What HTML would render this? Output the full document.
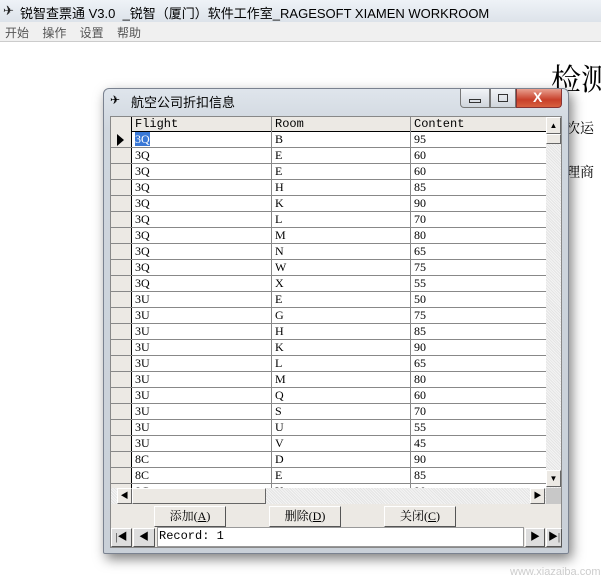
<!DOCTYPE html>
<html><head><meta charset="utf-8"><style>
*{margin:0;padding:0;box-sizing:border-box}
body{width:601px;height:585px;overflow:hidden;background:#fff;position:relative;font-family:"Liberation Sans","Noto Sans CJK SC",sans-serif}
.a{position:absolute;white-space:nowrap}
.cn{font-family:"Liberation Sans","Noto Sans CJK SC",sans-serif}
.cell{position:absolute;font-family:"Liberation Serif",serif;font-size:12px;line-height:15px;padding-left:3px;color:#000;white-space:nowrap}
.hd{font-family:"Liberation Mono",monospace;font-size:12px}
.btn{position:absolute;background:#ece9e4;border:1px solid;border-color:#fff #555 #555 #fff;font-family:"Liberation Serif","Noto Serif CJK SC",serif;font-size:12px;text-align:center;line-height:19px;white-space:nowrap}
.sb{position:absolute;background:#ece9e4;border:1px solid;border-color:#fff #666 #666 #fff}
</style></head><body>
<div class="a" style="left:0;top:0;width:601px;height:22px;background:linear-gradient(#eef2f7,#dde3ea)"></div>
<div class="a" style="left:3px;top:3px;font-size:13px;color:#222">✈</div>
<div class="a cn" style="left:20px;top:3px;font-size:13px;color:#000">锐智查票通 V3.0 &nbsp;_锐智（厦门）软件工作室_RAGESOFT XIAMEN WORKROOM</div>
<div class="a" style="left:0;top:22px;width:601px;height:20px;background:#f0f0f0;border-bottom:1px solid #ccc"></div>
<div class="a cn" style="left:5px;top:24px;font-size:12px;color:#555;word-spacing:10px">开始 操作 设置 帮助</div>
<div class="a" style="left:551px;top:55px;font-size:30px;font-family:'Noto Serif CJK SC',serif">检测</div>
<div class="a" style="left:566px;top:118px;font-size:14px;font-family:'Noto Serif CJK SC',serif">次运</div>
<div class="a" style="left:566px;top:162px;font-size:14px;font-family:'Noto Serif CJK SC',serif">理商</div>
<div class="a" style="left:103px;top:88px;width:466px;height:466px;background:linear-gradient(#dfe5ec,#cfd6de 40px,#c9d0d8);border:1px solid #7a8290;border-radius:6px 6px 2px 2px;box-shadow:3px 5px 12px rgba(0,0,0,.5)"></div>
<div class="a" style="left:110px;top:93px;font-size:12px">✈</div>
<div class="a cn" style="left:131px;top:92px;font-size:13px;color:#000">航空公司折扣信息</div>
<div class="a" style="left:460px;top:89px;width:30px;height:19px;border:1px solid #777;border-top:none;border-radius:0 0 0 4px;background:linear-gradient(#f2f4f7,#cfd5dc)"></div>
<div class="a" style="left:469px;top:99px;width:12px;height:4px;border:1px solid #333"></div>
<div class="a" style="left:490px;top:89px;width:26px;height:19px;border:1px solid #777;border-top:none;background:linear-gradient(#f2f4f7,#cfd5dc)"></div>
<div class="a" style="left:498px;top:94px;width:10px;height:8px;border:1px solid #333"></div>
<div class="a" style="left:516px;top:89px;width:46px;height:19px;border:1px solid #833;border-top:none;border-radius:0 0 4px 0;background:linear-gradient(#e8a090,#c8402a 60%,#d86040)"></div>
<div class="a" style="left:533px;top:89px;color:#fff;font-weight:bold;font-size:14px">X</div>
<div class="a" style="left:110px;top:116px;width:452px;height:432px;background:#ece9e4;border:1px solid #888"></div>
<div class="a" style="left:111px;top:117px;width:435px;height:371px;background:#fff;overflow:hidden">
<div class="a" style="left:0;top:0;width:435px;height:15px;background:#ece9e4;border-bottom:1px solid #000"></div>
<div class="a" style="left:0;top:0;width:21px;height:371px;background:#ece9e4;border-right:1px solid #000"></div>
<div class="cell hd" style="left:21px;top:0">Flight</div><div class="cell hd" style="left:161px;top:0">Room</div><div class="cell hd" style="left:300px;top:0">Content</div>
<div class="a" style="left:160px;top:0;width:1px;height:371px;background:#888"></div>
<div class="a" style="left:299px;top:0;width:1px;height:371px;background:#888"></div>
<div class="a" style="left:6px;top:17px;width:0;height:0;border-left:7px solid #000;border-top:6px solid transparent;border-bottom:6px solid transparent"></div>
<div id="rows"></div>
</div>
<div class="a" style="left:546px;top:117px;width:15px;height:371px;background:repeating-linear-gradient(45deg,#f4f4f4 0 1px,#e4e4e4 1px 2px)"></div>
<div class="sb" style="left:546px;top:117px;width:15px;height:17px;font-size:8px;text-align:center;line-height:15px">▲</div>
<div class="sb" style="left:546px;top:134px;width:15px;height:10px"></div>
<div class="sb" style="left:546px;top:470px;width:15px;height:17px;font-size:8px;text-align:center;line-height:15px">▼</div>
<div class="a" style="left:111px;top:488px;width:435px;height:16px;background:repeating-linear-gradient(45deg,#f4f4f4 0 1px,#e4e4e4 1px 2px)"></div>
<div class="sb" style="left:117px;top:488px;width:15px;height:16px;font-size:8px;text-align:center;line-height:14px">◀</div>
<div class="sb" style="left:132px;top:488px;width:134px;height:16px"></div>
<div class="sb" style="left:530px;top:488px;width:15px;height:16px;font-size:8px;text-align:center;line-height:14px">▶</div>
<div class="a" style="left:546px;top:488px;width:15px;height:16px;background:#c8c8c8"></div>
<div class="btn" style="left:154px;top:506px;width:72px;height:21px">添加(<u>A</u>)</div>
<div class="btn" style="left:269px;top:506px;width:72px;height:21px">删除(<u>D</u>)</div>
<div class="btn" style="left:384px;top:506px;width:72px;height:21px">关闭(<u>C</u>)</div>
<div class="btn" style="left:111px;top:528px;width:21px;height:19px;line-height:17px;font-size:10px;background:#ddd">|◀</div>
<div class="btn" style="left:133px;top:528px;width:22px;height:19px;line-height:17px;font-size:10px;background:#ddd">◀</div>
<div class="a" style="left:157px;top:527px;width:367px;height:20px;background:#fff;border:1px solid #999"></div>
<div class="cell hd" style="left:156px;top:529px">Record: 1</div>
<div class="btn" style="left:525px;top:528px;width:20px;height:19px;line-height:17px;font-size:10px;background:#ddd">▶</div>
<div class="btn" style="left:546px;top:528px;width:16px;height:19px;line-height:17px;font-size:10px;background:#ddd">▶|</div>
<div class="a" style="left:510px;top:566px;font-size:11px;color:#ccc">www.xiazaiba.com</div>
<script>
var d=[["3Q","B",95],["3Q","E",60],["3Q","E",60],["3Q","H",85],["3Q","K",90],["3Q","L",70],["3Q","M",80],["3Q","N",65],["3Q","W",75],["3Q","X",55],["3U","E",50],["3U","G",75],["3U","H",85],["3U","K",90],["3U","L",65],["3U","M",80],["3U","Q",60],["3U","S",70],["3U","U",55],["3U","V",45],["8C","D",90],["8C","E",85],["8C","K",90]];
var h="";for(var i=0;i<d.length;i++){var y=14+i*16;
h+='<div class="a" style="left:21px;top:'+(y+16)+'px;width:414px;height:1px;background:#888"></div>';
h+='<div class="a" style="left:0;top:'+(y+16)+'px;width:21px;height:1px;background:#888"></div>';
h+='<div class="cell" style="left:21px;top:'+(y+1)+'px">'+(i==0?'<span style="background:#3a78d6;color:#fff">3Q</span>':d[i][0])+'</div><div class="cell" style="left:161px;top:'+(y+1)+'px">'+d[i][1]+'</div><div class="cell" style="left:300px;top:'+(y+1)+'px">'+d[i][2]+'</div>';}
document.getElementById("rows").innerHTML=h;
</script>
</body></html>
